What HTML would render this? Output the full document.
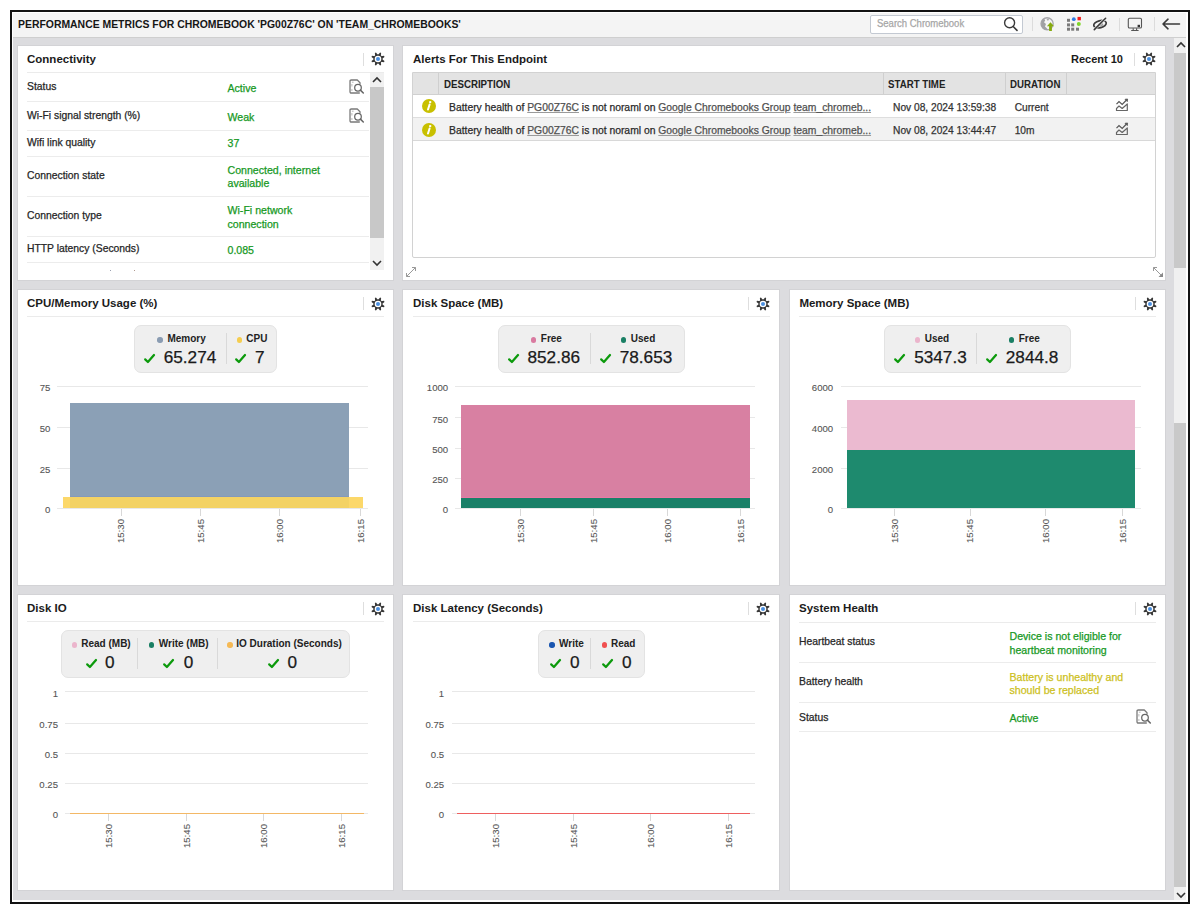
<!DOCTYPE html>
<html><head><meta charset="utf-8"><title>Performance Metrics</title>
<style>
html,body{margin:0;padding:0;width:1200px;height:914px;overflow:hidden;background:#fff}
.r{position:absolute}
.t{position:absolute;white-space:nowrap;line-height:1;font-family:"Liberation Sans", sans-serif;-webkit-text-stroke:0.25px currentColor}
.panel{background:#fff;box-shadow:0 0 0 1px #d3d3d6}
svg.r{overflow:visible}
</style></head><body>
<div class="r" style="left:10px;top:10px;width:1180px;height:894px;box-sizing:border-box;border:2px solid #121212;background:#fff"></div>
<div class="r" style="left:13px;top:13px;width:1173px;height:24px;background:#f4f4f4;"></div>
<div class="r" style="left:13px;top:37px;width:1173px;height:1px;background:#cfcfcf;"></div>
<div class="r" style="left:13px;top:38px;width:1161px;height:862px;background:#dcdcdf;"></div>
<div class="r" style="left:1174px;top:38px;width:12px;height:862px;background:#f0f0f0;"></div>
<div class="r" style="left:1174px;top:53px;width:12px;height:215px;background:#c9c9c9;"></div>
<div class="r" style="left:1174px;top:423px;width:12px;height:464px;background:#c9c9c9;"></div>
<svg class="r" style="left:1175px;top:41px;" width="12" height="8" viewBox="0 0 12 8"><path d="M2,6 L6,2 L10,6" fill="none" stroke="#333" stroke-width="1.6"/></svg>
<svg class="r" style="left:1175px;top:891px;" width="12" height="8" viewBox="0 0 12 8"><path d="M2,2 L6,6 L10,2" fill="none" stroke="#333" stroke-width="1.6"/></svg>
<div class="t" style="left:18.30px;top:18.59px;font-size:11px;font-weight:700;color:#161616;transform:scaleX(0.947);transform-origin:0 0;-webkit-text-stroke:0;">PERFORMANCE METRICS FOR CHROMEBOOK 'PG00Z76C' ON 'TEAM_CHROMEBOOKS'</div>
<div class="r" style="left:870px;top:15px;width:153px;height:19px;box-sizing:border-box;border:1px solid #c3c9d2;border-radius:2px;background:#fff"></div>
<div class="t" style="left:876.70px;top:19.14px;font-size:10px;font-weight:400;color:#a6a6a6;transform:scaleX(0.95);transform-origin:0 0;">Search Chromebook</div>
<svg class="r" style="left:1002px;top:16px;" width="18" height="17" viewBox="0 0 18 17"><circle cx="7.6" cy="6.7" r="5" fill="none" stroke="#3a3a3a" stroke-width="1.4"/><path d="M11.2,10.5 L15,14.4" stroke="#3a3a3a" stroke-width="1.6" stroke-linecap="round"/></svg>
<div class="r" style="left:1032px;top:17px;width:1px;height:14px;background:#dcdcdc;"></div>
<div class="r" style="left:1119px;top:18px;width:1px;height:13px;background:#dcdcdc;"></div>
<div class="r" style="left:1154px;top:17px;width:1px;height:14px;background:#dcdcdc;"></div>
<svg class="r" style="left:1039px;top:16px;" width="17" height="17" viewBox="0 0 17 17"><circle cx="8.1" cy="7.85" r="6.1" fill="none" stroke="#a6a6aa" stroke-width="1.3"/><path d="M2.2,7 Q2.5,3.5 5,2.6 L6.2,4.5 L5,6.3 L7,8 L6,10.5 L8,12.5 L9,14 Q4,14.5 2.2,9.5 Z" fill="#a0a0a4"/><path d="M7.5,3 L9.5,2.4 L10,4 L8.6,4.8 Z" fill="#a8a8ac"/><path d="M11.5,6.3 L15,10.2 H12.9 V14.9 H10.1 V10.2 H7.9 Z" fill="#86aa10"/></svg>
<svg class="r" style="left:1066px;top:16px;" width="16" height="16" viewBox="0 0 16 16"><rect x="1.00" y="2.80" width="3" height="3" fill="#7a7a7a"/><rect x="1.00" y="7.40" width="3" height="3" fill="#7a7a7a"/><rect x="5.20" y="7.40" width="3" height="3" fill="#7a7a7a"/><rect x="1.00" y="11.70" width="3" height="3" fill="#7a7a7a"/><rect x="5.20" y="11.70" width="3" height="3" fill="#7a7a7a"/><rect x="10.00" y="11.70" width="3" height="3" fill="#7a7a7a"/><circle cx="7.80" cy="3.20" r="1.9" fill="#2d7be6"/><rect x="11.50" y="0.90" width="3.4" height="3.4" fill="#f21b1b"/><circle cx="12.80" cy="7.90" r="2" fill="#7ed62a"/></svg>
<svg class="r" style="left:1092px;top:16px;" width="17" height="16" viewBox="0 0 17 16"><ellipse cx="8" cy="8.2" rx="6.4" ry="3.5" transform="rotate(-14 8 8.2)" fill="none" stroke="#3a3a3a" stroke-width="1.7"/><ellipse cx="8.6" cy="8.6" rx="2.6" ry="2.1" fill="#a0a0a0"/><path d="M2.3,13.6 L13.6,2.3" stroke="#f4f4f4" stroke-width="2.8"/><path d="M2.3,13.6 L13.6,2.3" stroke="#3a3a3a" stroke-width="1.6" stroke-linecap="round"/></svg>
<svg class="r" style="left:1127px;top:17px;" width="16" height="15" viewBox="0 0 16 15"><rect x="1.3" y="1.2" width="13.2" height="9.8" rx="1.3" fill="none" stroke="#555" stroke-width="1.1"/><rect x="10.6" y="7.8" width="2.4" height="2.4" fill="#333"/><path d="M6.2,11.3 V13.3 M9.6,11.3 V13.3 M4.2,13.5 H11.6" stroke="#555" stroke-width="1.1"/></svg>
<svg class="r" style="left:1161px;top:17px;" width="21" height="14" viewBox="0 0 21 14"><path d="M2,7 H18.5 M7,2.2 L2,7 L7,11.8" fill="none" stroke="#3a3a3a" stroke-width="1.6" stroke-linecap="round" stroke-linejoin="round"/></svg>
<div class="r panel" style="left:18px;top:46px;width:375px;height:234px"></div>
<div class="t" style="left:27.00px;top:53.57px;font-size:11.5px;font-weight:700;color:#1b1b1b;-webkit-text-stroke:0;">Connectivity</div>
<div class="r" style="left:363px;top:53px;width:1px;height:13px;background:#dedede;"></div>
<svg class="r" style="left:369.7px;top:51.4px;" width="16" height="16" viewBox="0 0 16 16"><polygon points="8.00,4.10 10.04,1.51 11.14,1.97 10.76,5.24 14.03,4.86 14.49,5.96 11.90,8.00 14.49,10.04 14.03,11.14 10.76,10.76 11.14,14.03 10.04,14.49 8.00,11.90 5.96,14.49 4.86,14.03 5.24,10.76 1.97,11.14 1.51,10.04 4.10,8.00 1.51,5.96 1.97,4.86 5.24,5.24 4.86,1.97 5.96,1.51" fill="#383838"/><circle cx="8" cy="8" r="4.5" fill="#383838"/><circle cx="8" cy="8" r="3.3" fill="#fff"/><circle cx="8" cy="8" r="2.0" fill="#4a8fe0"/></svg>
<div class="r" style="left:27px;top:72px;width:357px;height:1px;background:#ebebeb;"></div>
<div class="r" style="left:370px;top:73px;width:14px;height:197px;background:#f1f1f1;"></div>
<div class="r" style="left:370px;top:87px;width:14px;height:151px;background:#c8c8c8;"></div>
<svg class="r" style="left:371px;top:76px;" width="12" height="8" viewBox="0 0 12 8"><path d="M2,6 L6,2 L10,6" fill="none" stroke="#333" stroke-width="1.6"/></svg>
<svg class="r" style="left:371px;top:259px;" width="12" height="8" viewBox="0 0 12 8"><path d="M2,2 L6,6 L10,2" fill="none" stroke="#333" stroke-width="1.6"/></svg>
<div class="r" style="left:27px;top:101px;width:342px;height:1px;background:#ececec;"></div>
<div class="r" style="left:27px;top:130px;width:342px;height:1px;background:#ececec;"></div>
<div class="r" style="left:27px;top:156px;width:342px;height:1px;background:#ececec;"></div>
<div class="r" style="left:27px;top:196px;width:342px;height:1px;background:#ececec;"></div>
<div class="r" style="left:27px;top:236px;width:342px;height:1px;background:#ececec;"></div>
<div class="r" style="left:27px;top:262px;width:342px;height:1px;background:#ececec;"></div>
<div class="t" style="left:27.00px;top:82.24px;font-size:10.35px;font-weight:400;color:#262626;">Status</div>
<div class="t" style="left:27.00px;top:110.74px;font-size:10.35px;font-weight:400;color:#262626;">Wi-Fi signal strength (%)</div>
<div class="t" style="left:27.00px;top:137.74px;font-size:10.35px;font-weight:400;color:#262626;">Wifi link quality</div>
<div class="t" style="left:27.00px;top:170.64px;font-size:10.35px;font-weight:400;color:#262626;">Connection state</div>
<div class="t" style="left:27.00px;top:211.24px;font-size:10.35px;font-weight:400;color:#262626;">Connection type</div>
<div class="t" style="left:27.00px;top:244.24px;font-size:10.35px;font-weight:400;color:#262626;">HTTP latency (Seconds)</div>
<div class="t" style="left:227.50px;top:82.93px;font-size:10.6px;font-weight:400;color:#17991f;">Active</div>
<div class="t" style="left:227.50px;top:111.53px;font-size:10.6px;font-weight:400;color:#17991f;">Weak</div>
<div class="t" style="left:227.50px;top:138.23px;font-size:10.6px;font-weight:400;color:#17991f;">37</div>
<div class="t" style="left:227.50px;top:164.93px;font-size:10.6px;font-weight:400;color:#17991f;">Connected, internet</div>
<div class="t" style="left:227.50px;top:178.33px;font-size:10.6px;font-weight:400;color:#17991f;">available</div>
<div class="t" style="left:227.50px;top:204.93px;font-size:10.6px;font-weight:400;color:#17991f;">Wi-Fi network</div>
<div class="t" style="left:227.50px;top:218.53px;font-size:10.6px;font-weight:400;color:#17991f;">connection</div>
<div class="t" style="left:227.50px;top:244.93px;font-size:10.6px;font-weight:400;color:#17991f;">0.085</div>
<svg class="r" style="left:349px;top:78.7px;" width="16" height="16" viewBox="0 0 16 16"><path d="M10.8,14 H2.3 Q1,14 1,12.7 V2.3 Q1,1 2.3,1 H8.3 L11,3.7 V5.2" fill="none" stroke="#7a7a7a" stroke-width="1.3" stroke-linejoin="round"/><circle cx="9" cy="8.7" r="3.3" fill="#fff" stroke="#666" stroke-width="1.25"/><path d="M11.4,11.1 L14.3,14" stroke="#666" stroke-width="1.5" stroke-linecap="round"/><path d="M2.9,3.2 H4.6 M2.9,5 V7.5 M2.9,10 V12" stroke="#b0b0b0" stroke-width="0.9"/></svg>
<div class="r" style="left:110px;top:270px;width:1px;height:1px;background:#9aa0b0;"></div>
<div class="r" style="left:134px;top:270px;width:1px;height:1px;background:#b09a90;"></div>
<svg class="r" style="left:349px;top:107.7px;" width="16" height="16" viewBox="0 0 16 16"><path d="M10.8,14 H2.3 Q1,14 1,12.7 V2.3 Q1,1 2.3,1 H8.3 L11,3.7 V5.2" fill="none" stroke="#7a7a7a" stroke-width="1.3" stroke-linejoin="round"/><circle cx="9" cy="8.7" r="3.3" fill="#fff" stroke="#666" stroke-width="1.25"/><path d="M11.4,11.1 L14.3,14" stroke="#666" stroke-width="1.5" stroke-linecap="round"/><path d="M2.9,3.2 H4.6 M2.9,5 V7.5 M2.9,10 V12" stroke="#b0b0b0" stroke-width="0.9"/></svg>
<div class="r panel" style="left:403px;top:46px;width:762px;height:234px"></div>
<div class="t" style="left:413.00px;top:53.67px;font-size:11.5px;font-weight:700;color:#1b1b1b;-webkit-text-stroke:0;">Alerts For This Endpoint</div>
<div class="t" style="left:1071.00px;top:54.09px;font-size:11px;font-weight:700;color:#1b1b1b;-webkit-text-stroke:0;">Recent 10</div>
<div class="r" style="left:1134px;top:53px;width:1px;height:13px;background:#dedede;"></div>
<svg class="r" style="left:1141.2px;top:51.3px;" width="16" height="16" viewBox="0 0 16 16"><polygon points="8.00,4.10 10.04,1.51 11.14,1.97 10.76,5.24 14.03,4.86 14.49,5.96 11.90,8.00 14.49,10.04 14.03,11.14 10.76,10.76 11.14,14.03 10.04,14.49 8.00,11.90 5.96,14.49 4.86,14.03 5.24,10.76 1.97,11.14 1.51,10.04 4.10,8.00 1.51,5.96 1.97,4.86 5.24,5.24 4.86,1.97 5.96,1.51" fill="#383838"/><circle cx="8" cy="8" r="4.5" fill="#383838"/><circle cx="8" cy="8" r="3.3" fill="#fff"/><circle cx="8" cy="8" r="2.0" fill="#4a8fe0"/></svg>
<div class="r" style="left:412px;top:72px;width:744px;height:186px;box-sizing:border-box;border:1px solid #d2d2d2;border-radius:0 0 2px 2px"></div>
<div class="r" style="left:413px;top:73px;width:742px;height:21px;background:#e3e3e3;"></div>
<div class="r" style="left:413px;top:94px;width:742px;height:1px;background:#d0d0d0;"></div>
<div class="r" style="left:438px;top:73px;width:1px;height:21px;background:#cfcfcf;"></div>
<div class="r" style="left:883px;top:73px;width:1px;height:21px;background:#cfcfcf;"></div>
<div class="r" style="left:1005px;top:73px;width:1px;height:21px;background:#cfcfcf;"></div>
<div class="r" style="left:1066px;top:73px;width:1px;height:21px;background:#cfcfcf;"></div>
<div class="t" style="left:444.00px;top:78.89px;font-size:11px;font-weight:700;color:#222;transform:scaleX(0.88);transform-origin:0 0;-webkit-text-stroke:0;">DESCRIPTION</div>
<div class="t" style="left:888.30px;top:78.89px;font-size:11px;font-weight:700;color:#222;transform:scaleX(0.88);transform-origin:0 0;-webkit-text-stroke:0;">START TIME</div>
<div class="t" style="left:1010.30px;top:78.89px;font-size:11px;font-weight:700;color:#222;transform:scaleX(0.88);transform-origin:0 0;-webkit-text-stroke:0;">DURATION</div>
<div class="r" style="left:413px;top:117px;width:742px;height:1px;background:#dedede;"></div>
<div class="r" style="left:413px;top:118px;width:742px;height:22px;background:#f2f2f2;"></div>
<div class="r" style="left:413px;top:140px;width:742px;height:1px;background:#d8d8d8;"></div>
<svg class="r" style="left:420.8px;top:98px;" width="16" height="16" viewBox="0 0 16 16"><circle cx="8" cy="8" r="7" fill="#c8c000"/><circle cx="9.2" cy="4.1" r="1.2" fill="#fff"/><path d="M8.6,6.5 L7,11.5" stroke="#fff" stroke-width="2" stroke-linecap="round"/></svg>
<div class="t" style="left:449px;top:102.64px;font-size:10.35px;color:#2a2a2a">Battery health of <span style="text-decoration:underline;text-decoration-color:#9a9a9a;color:#505050">PG00Z76C</span> is not noraml on <span style="text-decoration:underline;text-decoration-color:#9a9a9a;color:#505050">Google Chromebooks Group</span> <span style="text-decoration:underline;text-decoration-color:#9a9a9a;color:#505050">team_chromeb...</span></div>
<div class="t" style="left:893.10px;top:102.77px;font-size:10.2px;font-weight:400;color:#333;">Nov 08, 2024 13:59:38</div>
<div class="t" style="left:1014.70px;top:102.77px;font-size:10.2px;font-weight:400;color:#333;">Current</div>
<svg class="r" style="left:1115px;top:98px;" width="16" height="15" viewBox="0 0 16 15"><path d="M1.5,6.2 L4,3.5 L7.2,6.5 L11.5,2" fill="none" stroke="#555" stroke-width="1.2"/><path d="M10,1.3 L12.6,1 L12.3,3.6 Z" fill="#555" stroke="#555" stroke-width="0.8"/><path d="M1.5,12.5 V10.5 L4,8 L7.2,10.5 L12.3,6 V12.5 Z" fill="none" stroke="#666" stroke-width="1.2" stroke-linejoin="round"/></svg>
<svg class="r" style="left:420.8px;top:121.5px;" width="16" height="16" viewBox="0 0 16 16"><circle cx="8" cy="8" r="7" fill="#c8c000"/><circle cx="9.2" cy="4.1" r="1.2" fill="#fff"/><path d="M8.6,6.5 L7,11.5" stroke="#fff" stroke-width="2" stroke-linecap="round"/></svg>
<div class="t" style="left:449px;top:125.64px;font-size:10.35px;color:#2a2a2a">Battery health of <span style="text-decoration:underline;text-decoration-color:#9a9a9a;color:#505050">PG00Z76C</span> is not noraml on <span style="text-decoration:underline;text-decoration-color:#9a9a9a;color:#505050">Google Chromebooks Group</span> <span style="text-decoration:underline;text-decoration-color:#9a9a9a;color:#505050">team_chromeb...</span></div>
<div class="t" style="left:893.10px;top:125.77px;font-size:10.2px;font-weight:400;color:#333;">Nov 08, 2024 13:44:47</div>
<div class="t" style="left:1014.70px;top:125.77px;font-size:10.2px;font-weight:400;color:#333;">10m</div>
<svg class="r" style="left:1115px;top:121.5px;" width="16" height="15" viewBox="0 0 16 15"><path d="M1.5,6.2 L4,3.5 L7.2,6.5 L11.5,2" fill="none" stroke="#555" stroke-width="1.2"/><path d="M10,1.3 L12.6,1 L12.3,3.6 Z" fill="#555" stroke="#555" stroke-width="0.8"/><path d="M1.5,12.5 V10.5 L4,8 L7.2,10.5 L12.3,6 V12.5 Z" fill="none" stroke="#666" stroke-width="1.2" stroke-linejoin="round"/></svg>
<svg class="r" style="left:404px;top:265px;" width="14" height="14" viewBox="0 0 14 14"><path d="M2.5,11.5 L11.5,2.5 M2.5,11.5 V8 M2.5,11.5 H6 M11.5,2.5 H8 M11.5,2.5 V6" fill="none" stroke="#999" stroke-width="1"/></svg>
<svg class="r" style="left:1151px;top:265px;" width="14" height="14" viewBox="0 0 14 14"><path d="M2.5,2.5 L11.5,11.5 M2.5,2.5 V6 M2.5,2.5 H6" fill="none" stroke="#999" stroke-width="1"/><path d="M12,12 L12,7.5 L7.5,12 Z" fill="#888"/></svg>
<div class="r panel" style="left:18px;top:290px;width:375px;height:295px"></div>
<div class="t" style="left:27.00px;top:298.07px;font-size:11.5px;font-weight:700;color:#1b1b1b;-webkit-text-stroke:0;">CPU/Memory Usage (%)</div>
<div class="r" style="left:363px;top:297px;width:1px;height:13px;background:#dedede;"></div>
<svg class="r" style="left:369.6px;top:295.5px;" width="16" height="16" viewBox="0 0 16 16"><polygon points="8.00,4.10 10.04,1.51 11.14,1.97 10.76,5.24 14.03,4.86 14.49,5.96 11.90,8.00 14.49,10.04 14.03,11.14 10.76,10.76 11.14,14.03 10.04,14.49 8.00,11.90 5.96,14.49 4.86,14.03 5.24,10.76 1.97,11.14 1.51,10.04 4.10,8.00 1.51,5.96 1.97,4.86 5.24,5.24 4.86,1.97 5.96,1.51" fill="#383838"/><circle cx="8" cy="8" r="4.5" fill="#383838"/><circle cx="8" cy="8" r="3.3" fill="#fff"/><circle cx="8" cy="8" r="2.0" fill="#4a8fe0"/></svg>
<div class="r" style="left:27px;top:316px;width:357px;height:1px;background:#ebebeb;"></div>
<div class="r" style="left:134px;top:325px;width:143px;height:48px;box-sizing:border-box;background:#efefef;border:1px solid #e3e3e3;border-radius:7px"></div>
<div class="r" style="left:226px;top:333px;width:1px;height:31px;background:#d9d9d9;"></div>
<div class="r" style="left:157.30px;top:337.30px;width:5.4px;height:5.4px;border-radius:50%;background:#8a9cb2"></div>
<div class="t" style="left:167.40px;top:334.24px;font-size:10px;font-weight:700;color:#222;-webkit-text-stroke:0;">Memory</div>
<svg class="r" style="left:142.8px;top:352.8px;" width="13" height="12" viewBox="0 0 13 12"><polyline points="2.2,6.4 4.9,9 11,2" fill="none" stroke="#0c9a0c" stroke-width="2.25" stroke-linecap="round" stroke-linejoin="round"/></svg>
<div class="t" style="left:163.70px;top:348.74px;font-size:17.2px;font-weight:400;color:#1a1a1a;">65.274</div>
<div class="r" style="left:236.70px;top:337.30px;width:5.4px;height:5.4px;border-radius:50%;background:#f5cd4f"></div>
<div class="t" style="left:246.30px;top:334.24px;font-size:10px;font-weight:700;color:#222;-webkit-text-stroke:0;">CPU</div>
<svg class="r" style="left:234.2px;top:352.8px;" width="13" height="12" viewBox="0 0 13 12"><polyline points="2.2,6.4 4.9,9 11,2" fill="none" stroke="#0c9a0c" stroke-width="2.25" stroke-linecap="round" stroke-linejoin="round"/></svg>
<div class="t" style="left:255.00px;top:348.74px;font-size:17.2px;font-weight:400;color:#1a1a1a;">7</div>
<div class="r" style="left:57px;top:386px;width:311px;height:1px;background:#e8e8e8;"></div>
<div class="t" style="right:1149.70px;top:383.17px;font-size:9.6px;font-weight:400;color:#555;text-align:right;-webkit-text-stroke:0.1px #555;">75</div>
<div class="r" style="left:57px;top:427px;width:311px;height:1px;background:#e8e8e8;"></div>
<div class="t" style="right:1149.70px;top:424.07px;font-size:9.6px;font-weight:400;color:#555;text-align:right;-webkit-text-stroke:0.1px #555;">50</div>
<div class="r" style="left:57px;top:468px;width:311px;height:1px;background:#e8e8e8;"></div>
<div class="t" style="right:1149.70px;top:465.17px;font-size:9.6px;font-weight:400;color:#555;text-align:right;-webkit-text-stroke:0.1px #555;">25</div>
<div class="r" style="left:57px;top:508px;width:311px;height:1px;background:#e8e8e8;"></div>
<div class="t" style="right:1149.70px;top:505.47px;font-size:9.6px;font-weight:400;color:#555;text-align:right;-webkit-text-stroke:0.1px #555;">0</div>
<div class="r" style="left:121px;top:509px;width:1px;height:7px;background:#d8d8d8;"></div>
<div class="t" style="left:101.30px;top:525.00px;width:40px;height:12px;line-height:12px;text-align:center;font-size:9.6px;color:#5a5a5a;-webkit-text-stroke:0.1px #5a5a5a;transform:rotate(-90deg)">15:30</div>
<div class="r" style="left:200px;top:509px;width:1px;height:7px;background:#d8d8d8;"></div>
<div class="t" style="left:181.00px;top:525.00px;width:40px;height:12px;line-height:12px;text-align:center;font-size:9.6px;color:#5a5a5a;-webkit-text-stroke:0.1px #5a5a5a;transform:rotate(-90deg)">15:45</div>
<div class="r" style="left:279px;top:509px;width:1px;height:7px;background:#d8d8d8;"></div>
<div class="t" style="left:260.00px;top:525.00px;width:40px;height:12px;line-height:12px;text-align:center;font-size:9.6px;color:#5a5a5a;-webkit-text-stroke:0.1px #5a5a5a;transform:rotate(-90deg)">16:00</div>
<div class="r" style="left:360px;top:509px;width:1px;height:7px;background:#d8d8d8;"></div>
<div class="t" style="left:340.70px;top:525.00px;width:40px;height:12px;line-height:12px;text-align:center;font-size:9.6px;color:#5a5a5a;-webkit-text-stroke:0.1px #5a5a5a;transform:rotate(-90deg)">16:15</div>
<div class="r" style="left:70px;top:403px;width:279px;height:94px;background:#8ba0b6;"></div>
<div class="r" style="left:70px;top:496px;width:279px;height:1px;background:#8499ba;"></div>
<div class="r" style="left:63px;top:497px;width:7px;height:11px;background:#fcd86a;"></div>
<div class="r" style="left:70px;top:497px;width:279px;height:11px;background:#f3d264;"></div>
<div class="r" style="left:349px;top:497px;width:14px;height:11px;background:#fcd86a;"></div>
<div class="r panel" style="left:403px;top:290px;width:376px;height:295px"></div>
<div class="t" style="left:413.00px;top:298.07px;font-size:11.5px;font-weight:700;color:#1b1b1b;-webkit-text-stroke:0;">Disk Space (MB)</div>
<div class="r" style="left:748px;top:297px;width:1px;height:13px;background:#dedede;"></div>
<svg class="r" style="left:755.4px;top:295.5px;" width="16" height="16" viewBox="0 0 16 16"><polygon points="8.00,4.10 10.04,1.51 11.14,1.97 10.76,5.24 14.03,4.86 14.49,5.96 11.90,8.00 14.49,10.04 14.03,11.14 10.76,10.76 11.14,14.03 10.04,14.49 8.00,11.90 5.96,14.49 4.86,14.03 5.24,10.76 1.97,11.14 1.51,10.04 4.10,8.00 1.51,5.96 1.97,4.86 5.24,5.24 4.86,1.97 5.96,1.51" fill="#383838"/><circle cx="8" cy="8" r="4.5" fill="#383838"/><circle cx="8" cy="8" r="3.3" fill="#fff"/><circle cx="8" cy="8" r="2.0" fill="#4a8fe0"/></svg>
<div class="r" style="left:413px;top:316px;width:357px;height:1px;background:#ebebeb;"></div>
<div class="r" style="left:498px;top:325px;width:187px;height:48px;box-sizing:border-box;background:#efefef;border:1px solid #e3e3e3;border-radius:7px"></div>
<div class="r" style="left:590px;top:333px;width:1px;height:31px;background:#d9d9d9;"></div>
<div class="r" style="left:531.00px;top:337.30px;width:5.4px;height:5.4px;border-radius:50%;background:#d97aa0"></div>
<div class="t" style="left:540.80px;top:334.24px;font-size:10px;font-weight:700;color:#222;-webkit-text-stroke:0;">Free</div>
<svg class="r" style="left:506.8px;top:352.8px;" width="13" height="12" viewBox="0 0 13 12"><polyline points="2.2,6.4 4.9,9 11,2" fill="none" stroke="#0c9a0c" stroke-width="2.25" stroke-linecap="round" stroke-linejoin="round"/></svg>
<div class="t" style="left:527.50px;top:348.74px;font-size:17.2px;font-weight:400;color:#1a1a1a;">852.86</div>
<div class="r" style="left:620.60px;top:337.30px;width:5.4px;height:5.4px;border-radius:50%;background:#1a7f64"></div>
<div class="t" style="left:630.80px;top:334.24px;font-size:10px;font-weight:700;color:#222;-webkit-text-stroke:0;">Used</div>
<svg class="r" style="left:598.5px;top:352.8px;" width="13" height="12" viewBox="0 0 13 12"><polyline points="2.2,6.4 4.9,9 11,2" fill="none" stroke="#0c9a0c" stroke-width="2.25" stroke-linecap="round" stroke-linejoin="round"/></svg>
<div class="t" style="left:619.70px;top:348.74px;font-size:17.2px;font-weight:400;color:#1a1a1a;">78.653</div>
<div class="r" style="left:455px;top:386px;width:300px;height:1px;background:#e8e8e8;"></div>
<div class="t" style="right:751.80px;top:383.17px;font-size:9.6px;font-weight:400;color:#555;text-align:right;-webkit-text-stroke:0.1px #555;">1000</div>
<div class="r" style="left:455px;top:417px;width:300px;height:1px;background:#e8e8e8;"></div>
<div class="t" style="right:751.80px;top:414.67px;font-size:9.6px;font-weight:400;color:#555;text-align:right;-webkit-text-stroke:0.1px #555;">750</div>
<div class="r" style="left:455px;top:448px;width:300px;height:1px;background:#e8e8e8;"></div>
<div class="t" style="right:751.80px;top:445.27px;font-size:9.6px;font-weight:400;color:#555;text-align:right;-webkit-text-stroke:0.1px #555;">500</div>
<div class="r" style="left:455px;top:478px;width:300px;height:1px;background:#e8e8e8;"></div>
<div class="t" style="right:751.80px;top:474.87px;font-size:9.6px;font-weight:400;color:#555;text-align:right;-webkit-text-stroke:0.1px #555;">250</div>
<div class="r" style="left:455px;top:508px;width:300px;height:1px;background:#e8e8e8;"></div>
<div class="t" style="right:751.80px;top:505.47px;font-size:9.6px;font-weight:400;color:#555;text-align:right;-webkit-text-stroke:0.1px #555;">0</div>
<div class="r" style="left:520px;top:509px;width:1px;height:7px;background:#d8d8d8;"></div>
<div class="t" style="left:501.20px;top:525.00px;width:40px;height:12px;line-height:12px;text-align:center;font-size:9.6px;color:#5a5a5a;-webkit-text-stroke:0.1px #5a5a5a;transform:rotate(-90deg)">15:30</div>
<div class="r" style="left:593px;top:509px;width:1px;height:7px;background:#d8d8d8;"></div>
<div class="t" style="left:574.20px;top:525.00px;width:40px;height:12px;line-height:12px;text-align:center;font-size:9.6px;color:#5a5a5a;-webkit-text-stroke:0.1px #5a5a5a;transform:rotate(-90deg)">15:45</div>
<div class="r" style="left:667px;top:509px;width:1px;height:7px;background:#d8d8d8;"></div>
<div class="t" style="left:647.60px;top:525.00px;width:40px;height:12px;line-height:12px;text-align:center;font-size:9.6px;color:#5a5a5a;-webkit-text-stroke:0.1px #5a5a5a;transform:rotate(-90deg)">16:00</div>
<div class="r" style="left:740px;top:509px;width:1px;height:7px;background:#d8d8d8;"></div>
<div class="t" style="left:721.00px;top:525.00px;width:40px;height:12px;line-height:12px;text-align:center;font-size:9.6px;color:#5a5a5a;-webkit-text-stroke:0.1px #5a5a5a;transform:rotate(-90deg)">16:15</div>
<div class="r" style="left:461px;top:405px;width:289px;height:93px;background:#d880a2;"></div>
<div class="r" style="left:461px;top:497px;width:289px;height:1px;background:#ea7aa6;"></div>
<div class="r" style="left:461px;top:498px;width:289px;height:10px;background:#1a8068;"></div>
<div class="r panel" style="left:790px;top:290px;width:375px;height:295px"></div>
<div class="t" style="left:799.40px;top:298.07px;font-size:11.5px;font-weight:700;color:#1b1b1b;-webkit-text-stroke:0;">Memory Space (MB)</div>
<div class="r" style="left:1135px;top:297px;width:1px;height:13px;background:#dedede;"></div>
<svg class="r" style="left:1141.8px;top:295.5px;" width="16" height="16" viewBox="0 0 16 16"><polygon points="8.00,4.10 10.04,1.51 11.14,1.97 10.76,5.24 14.03,4.86 14.49,5.96 11.90,8.00 14.49,10.04 14.03,11.14 10.76,10.76 11.14,14.03 10.04,14.49 8.00,11.90 5.96,14.49 4.86,14.03 5.24,10.76 1.97,11.14 1.51,10.04 4.10,8.00 1.51,5.96 1.97,4.86 5.24,5.24 4.86,1.97 5.96,1.51" fill="#383838"/><circle cx="8" cy="8" r="4.5" fill="#383838"/><circle cx="8" cy="8" r="3.3" fill="#fff"/><circle cx="8" cy="8" r="2.0" fill="#4a8fe0"/></svg>
<div class="r" style="left:799px;top:316px;width:357px;height:1px;background:#ebebeb;"></div>
<div class="r" style="left:884px;top:325px;width:187px;height:48px;box-sizing:border-box;background:#efefef;border:1px solid #e3e3e3;border-radius:7px"></div>
<div class="r" style="left:976px;top:333px;width:1px;height:31px;background:#d9d9d9;"></div>
<div class="r" style="left:914.80px;top:337.30px;width:5.4px;height:5.4px;border-radius:50%;background:#ebb5cc"></div>
<div class="t" style="left:924.70px;top:334.24px;font-size:10px;font-weight:700;color:#222;-webkit-text-stroke:0;">Used</div>
<svg class="r" style="left:892.7px;top:352.8px;" width="13" height="12" viewBox="0 0 13 12"><polyline points="2.2,6.4 4.9,9 11,2" fill="none" stroke="#0c9a0c" stroke-width="2.25" stroke-linecap="round" stroke-linejoin="round"/></svg>
<div class="t" style="left:914.20px;top:348.74px;font-size:17.2px;font-weight:400;color:#1a1a1a;">5347.3</div>
<div class="r" style="left:1008.60px;top:337.30px;width:5.4px;height:5.4px;border-radius:50%;background:#1a7f64"></div>
<div class="t" style="left:1018.70px;top:334.24px;font-size:10px;font-weight:700;color:#222;-webkit-text-stroke:0;">Free</div>
<svg class="r" style="left:985.2px;top:352.8px;" width="13" height="12" viewBox="0 0 13 12"><polyline points="2.2,6.4 4.9,9 11,2" fill="none" stroke="#0c9a0c" stroke-width="2.25" stroke-linecap="round" stroke-linejoin="round"/></svg>
<div class="t" style="left:1005.80px;top:348.74px;font-size:17.2px;font-weight:400;color:#1a1a1a;">2844.8</div>
<div class="r" style="left:841px;top:386px;width:300px;height:1px;background:#e8e8e8;"></div>
<div class="t" style="right:366.80px;top:383.17px;font-size:9.6px;font-weight:400;color:#555;text-align:right;-webkit-text-stroke:0.1px #555;">6000</div>
<div class="r" style="left:841px;top:427px;width:300px;height:1px;background:#e8e8e8;"></div>
<div class="t" style="right:366.80px;top:424.07px;font-size:9.6px;font-weight:400;color:#555;text-align:right;-webkit-text-stroke:0.1px #555;">4000</div>
<div class="r" style="left:841px;top:468px;width:300px;height:1px;background:#e8e8e8;"></div>
<div class="t" style="right:366.80px;top:465.17px;font-size:9.6px;font-weight:400;color:#555;text-align:right;-webkit-text-stroke:0.1px #555;">2000</div>
<div class="r" style="left:841px;top:508px;width:300px;height:1px;background:#e8e8e8;"></div>
<div class="t" style="right:366.80px;top:505.47px;font-size:9.6px;font-weight:400;color:#555;text-align:right;-webkit-text-stroke:0.1px #555;">0</div>
<div class="r" style="left:894px;top:509px;width:1px;height:7px;background:#d8d8d8;"></div>
<div class="t" style="left:875.10px;top:525.00px;width:40px;height:12px;line-height:12px;text-align:center;font-size:9.6px;color:#5a5a5a;-webkit-text-stroke:0.1px #5a5a5a;transform:rotate(-90deg)">15:30</div>
<div class="r" style="left:970px;top:509px;width:1px;height:7px;background:#d8d8d8;"></div>
<div class="t" style="left:950.40px;top:525.00px;width:40px;height:12px;line-height:12px;text-align:center;font-size:9.6px;color:#5a5a5a;-webkit-text-stroke:0.1px #5a5a5a;transform:rotate(-90deg)">15:45</div>
<div class="r" style="left:1045px;top:509px;width:1px;height:7px;background:#d8d8d8;"></div>
<div class="t" style="left:1025.80px;top:525.00px;width:40px;height:12px;line-height:12px;text-align:center;font-size:9.6px;color:#5a5a5a;-webkit-text-stroke:0.1px #5a5a5a;transform:rotate(-90deg)">16:00</div>
<div class="r" style="left:1122px;top:509px;width:1px;height:7px;background:#d8d8d8;"></div>
<div class="t" style="left:1102.50px;top:525.00px;width:40px;height:12px;line-height:12px;text-align:center;font-size:9.6px;color:#5a5a5a;-webkit-text-stroke:0.1px #5a5a5a;transform:rotate(-90deg)">16:15</div>
<div class="r" style="left:847px;top:400px;width:288px;height:50px;background:#ebbad0;"></div>
<div class="r" style="left:847px;top:450px;width:288px;height:58px;background:#1e8a6e;"></div>
<div class="r panel" style="left:18px;top:595px;width:375px;height:295px"></div>
<div class="t" style="left:27.00px;top:603.07px;font-size:11.5px;font-weight:700;color:#1b1b1b;-webkit-text-stroke:0;">Disk IO</div>
<div class="r" style="left:363px;top:602px;width:1px;height:13px;background:#dedede;"></div>
<svg class="r" style="left:369.6px;top:600.5px;" width="16" height="16" viewBox="0 0 16 16"><polygon points="8.00,4.10 10.04,1.51 11.14,1.97 10.76,5.24 14.03,4.86 14.49,5.96 11.90,8.00 14.49,10.04 14.03,11.14 10.76,10.76 11.14,14.03 10.04,14.49 8.00,11.90 5.96,14.49 4.86,14.03 5.24,10.76 1.97,11.14 1.51,10.04 4.10,8.00 1.51,5.96 1.97,4.86 5.24,5.24 4.86,1.97 5.96,1.51" fill="#383838"/><circle cx="8" cy="8" r="4.5" fill="#383838"/><circle cx="8" cy="8" r="3.3" fill="#fff"/><circle cx="8" cy="8" r="2.0" fill="#4a8fe0"/></svg>
<div class="r" style="left:27px;top:621px;width:357px;height:1px;background:#ebebeb;"></div>
<div class="r" style="left:61px;top:630px;width:289px;height:48px;box-sizing:border-box;background:#efefef;border:1px solid #e3e3e3;border-radius:7px"></div>
<div class="r" style="left:137px;top:638px;width:1px;height:31px;background:#d9d9d9;"></div>
<div class="r" style="left:217px;top:638px;width:1px;height:31px;background:#d9d9d9;"></div>
<div class="r" style="left:71.80px;top:642.30px;width:5.4px;height:5.4px;border-radius:50%;background:#ebb5cc"></div>
<div class="t" style="left:81.25px;top:639.24px;font-size:10px;font-weight:700;color:#222;-webkit-text-stroke:0;">Read (MB)</div>
<svg class="r" style="left:84.75px;top:658.25px;" width="13" height="12" viewBox="0 0 13 12"><polyline points="2.2,6.4 4.9,9 11,2" fill="none" stroke="#0c9a0c" stroke-width="2.25" stroke-linecap="round" stroke-linejoin="round"/></svg>
<div class="t" style="left:105.00px;top:654.19px;font-size:17.2px;font-weight:400;color:#1a1a1a;">0</div>
<div class="r" style="left:148.55px;top:642.30px;width:5.4px;height:5.4px;border-radius:50%;background:#1a7f64"></div>
<div class="t" style="left:158.75px;top:639.24px;font-size:10px;font-weight:700;color:#222;-webkit-text-stroke:0;">Write (MB)</div>
<svg class="r" style="left:162.25px;top:658.25px;" width="13" height="12" viewBox="0 0 13 12"><polyline points="2.2,6.4 4.9,9 11,2" fill="none" stroke="#0c9a0c" stroke-width="2.25" stroke-linecap="round" stroke-linejoin="round"/></svg>
<div class="t" style="left:183.75px;top:654.19px;font-size:17.2px;font-weight:400;color:#1a1a1a;">0</div>
<div class="r" style="left:227.30px;top:642.30px;width:5.4px;height:5.4px;border-radius:50%;background:#f5b955"></div>
<div class="t" style="left:236.25px;top:639.24px;font-size:10px;font-weight:700;color:#222;-webkit-text-stroke:0;">IO Duration (Seconds)</div>
<svg class="r" style="left:267.25px;top:658.25px;" width="13" height="12" viewBox="0 0 13 12"><polyline points="2.2,6.4 4.9,9 11,2" fill="none" stroke="#0c9a0c" stroke-width="2.25" stroke-linecap="round" stroke-linejoin="round"/></svg>
<div class="t" style="left:287.50px;top:654.19px;font-size:17.2px;font-weight:400;color:#1a1a1a;">0</div>
<div class="r" style="left:65px;top:691px;width:303px;height:1px;background:#e8e8e8;"></div>
<div class="t" style="right:1142.00px;top:688.67px;font-size:9.6px;font-weight:400;color:#555;text-align:right;-webkit-text-stroke:0.1px #555;">1</div>
<div class="r" style="left:65px;top:723px;width:303px;height:1px;background:#e8e8e8;"></div>
<div class="t" style="right:1142.00px;top:720.37px;font-size:9.6px;font-weight:400;color:#555;text-align:right;-webkit-text-stroke:0.1px #555;">0.75</div>
<div class="r" style="left:65px;top:753px;width:303px;height:1px;background:#e8e8e8;"></div>
<div class="t" style="right:1142.00px;top:750.47px;font-size:9.6px;font-weight:400;color:#555;text-align:right;-webkit-text-stroke:0.1px #555;">0.5</div>
<div class="r" style="left:65px;top:783px;width:303px;height:1px;background:#e8e8e8;"></div>
<div class="t" style="right:1142.00px;top:780.37px;font-size:9.6px;font-weight:400;color:#555;text-align:right;-webkit-text-stroke:0.1px #555;">0.25</div>
<div class="r" style="left:65px;top:813px;width:303px;height:1px;background:#e8e8e8;"></div>
<div class="t" style="right:1142.00px;top:810.47px;font-size:9.6px;font-weight:400;color:#555;text-align:right;-webkit-text-stroke:0.1px #555;">0</div>
<div class="r" style="left:108px;top:814px;width:1px;height:7px;background:#d8d8d8;"></div>
<div class="t" style="left:89.00px;top:830.00px;width:40px;height:12px;line-height:12px;text-align:center;font-size:9.6px;color:#5a5a5a;-webkit-text-stroke:0.1px #5a5a5a;transform:rotate(-90deg)">15:30</div>
<div class="r" style="left:186px;top:814px;width:1px;height:7px;background:#d8d8d8;"></div>
<div class="t" style="left:167.10px;top:830.00px;width:40px;height:12px;line-height:12px;text-align:center;font-size:9.6px;color:#5a5a5a;-webkit-text-stroke:0.1px #5a5a5a;transform:rotate(-90deg)">15:45</div>
<div class="r" style="left:263px;top:814px;width:1px;height:7px;background:#d8d8d8;"></div>
<div class="t" style="left:244.20px;top:830.00px;width:40px;height:12px;line-height:12px;text-align:center;font-size:9.6px;color:#5a5a5a;-webkit-text-stroke:0.1px #5a5a5a;transform:rotate(-90deg)">16:00</div>
<div class="r" style="left:341px;top:814px;width:1px;height:7px;background:#d8d8d8;"></div>
<div class="t" style="left:321.90px;top:830.00px;width:40px;height:12px;line-height:12px;text-align:center;font-size:9.6px;color:#5a5a5a;-webkit-text-stroke:0.1px #5a5a5a;transform:rotate(-90deg)">16:15</div>
<div class="r" style="left:70px;top:813px;width:294px;height:1px;background:#f3b866;"></div>
<div class="r panel" style="left:403px;top:595px;width:376px;height:295px"></div>
<div class="t" style="left:413.00px;top:603.07px;font-size:11.5px;font-weight:700;color:#1b1b1b;-webkit-text-stroke:0;">Disk Latency (Seconds)</div>
<div class="r" style="left:748px;top:602px;width:1px;height:13px;background:#dedede;"></div>
<svg class="r" style="left:755.4px;top:600.5px;" width="16" height="16" viewBox="0 0 16 16"><polygon points="8.00,4.10 10.04,1.51 11.14,1.97 10.76,5.24 14.03,4.86 14.49,5.96 11.90,8.00 14.49,10.04 14.03,11.14 10.76,10.76 11.14,14.03 10.04,14.49 8.00,11.90 5.96,14.49 4.86,14.03 5.24,10.76 1.97,11.14 1.51,10.04 4.10,8.00 1.51,5.96 1.97,4.86 5.24,5.24 4.86,1.97 5.96,1.51" fill="#383838"/><circle cx="8" cy="8" r="4.5" fill="#383838"/><circle cx="8" cy="8" r="3.3" fill="#fff"/><circle cx="8" cy="8" r="2.0" fill="#4a8fe0"/></svg>
<div class="r" style="left:413px;top:621px;width:357px;height:1px;background:#ebebeb;"></div>
<div class="r" style="left:538px;top:630px;width:107px;height:48px;box-sizing:border-box;background:#efefef;border:1px solid #e3e3e3;border-radius:7px"></div>
<div class="r" style="left:590px;top:638px;width:1px;height:31px;background:#d9d9d9;"></div>
<div class="r" style="left:549.30px;top:642.30px;width:5.4px;height:5.4px;border-radius:50%;background:#1a56b0"></div>
<div class="t" style="left:559.00px;top:639.24px;font-size:10px;font-weight:700;color:#222;-webkit-text-stroke:0;">Write</div>
<svg class="r" style="left:548.5px;top:658.25px;" width="13" height="12" viewBox="0 0 13 12"><polyline points="2.2,6.4 4.9,9 11,2" fill="none" stroke="#0c9a0c" stroke-width="2.25" stroke-linecap="round" stroke-linejoin="round"/></svg>
<div class="t" style="left:570.00px;top:654.19px;font-size:17.2px;font-weight:400;color:#1a1a1a;">0</div>
<div class="r" style="left:601.50px;top:642.30px;width:5.4px;height:5.4px;border-radius:50%;background:#f05050"></div>
<div class="t" style="left:611.00px;top:639.24px;font-size:10px;font-weight:700;color:#222;-webkit-text-stroke:0;">Read</div>
<svg class="r" style="left:601.0px;top:658.25px;" width="13" height="12" viewBox="0 0 13 12"><polyline points="2.2,6.4 4.9,9 11,2" fill="none" stroke="#0c9a0c" stroke-width="2.25" stroke-linecap="round" stroke-linejoin="round"/></svg>
<div class="t" style="left:622.00px;top:654.19px;font-size:17.2px;font-weight:400;color:#1a1a1a;">0</div>
<div class="r" style="left:452px;top:691px;width:303px;height:1px;background:#e8e8e8;"></div>
<div class="t" style="right:755.80px;top:688.67px;font-size:9.6px;font-weight:400;color:#555;text-align:right;-webkit-text-stroke:0.1px #555;">1</div>
<div class="r" style="left:452px;top:723px;width:303px;height:1px;background:#e8e8e8;"></div>
<div class="t" style="right:755.80px;top:720.37px;font-size:9.6px;font-weight:400;color:#555;text-align:right;-webkit-text-stroke:0.1px #555;">0.75</div>
<div class="r" style="left:452px;top:753px;width:303px;height:1px;background:#e8e8e8;"></div>
<div class="t" style="right:755.80px;top:750.47px;font-size:9.6px;font-weight:400;color:#555;text-align:right;-webkit-text-stroke:0.1px #555;">0.5</div>
<div class="r" style="left:452px;top:783px;width:303px;height:1px;background:#e8e8e8;"></div>
<div class="t" style="right:755.80px;top:780.37px;font-size:9.6px;font-weight:400;color:#555;text-align:right;-webkit-text-stroke:0.1px #555;">0.25</div>
<div class="r" style="left:452px;top:813px;width:303px;height:1px;background:#e8e8e8;"></div>
<div class="t" style="right:755.80px;top:810.47px;font-size:9.6px;font-weight:400;color:#555;text-align:right;-webkit-text-stroke:0.1px #555;">0</div>
<div class="r" style="left:495px;top:814px;width:1px;height:7px;background:#d8d8d8;"></div>
<div class="t" style="left:476.00px;top:830.00px;width:40px;height:12px;line-height:12px;text-align:center;font-size:9.6px;color:#5a5a5a;-webkit-text-stroke:0.1px #5a5a5a;transform:rotate(-90deg)">15:30</div>
<div class="r" style="left:573px;top:814px;width:1px;height:7px;background:#d8d8d8;"></div>
<div class="t" style="left:553.60px;top:830.00px;width:40px;height:12px;line-height:12px;text-align:center;font-size:9.6px;color:#5a5a5a;-webkit-text-stroke:0.1px #5a5a5a;transform:rotate(-90deg)">15:45</div>
<div class="r" style="left:650px;top:814px;width:1px;height:7px;background:#d8d8d8;"></div>
<div class="t" style="left:631.20px;top:830.00px;width:40px;height:12px;line-height:12px;text-align:center;font-size:9.6px;color:#5a5a5a;-webkit-text-stroke:0.1px #5a5a5a;transform:rotate(-90deg)">16:00</div>
<div class="r" style="left:728px;top:814px;width:1px;height:7px;background:#d8d8d8;"></div>
<div class="t" style="left:708.80px;top:830.00px;width:40px;height:12px;line-height:12px;text-align:center;font-size:9.6px;color:#5a5a5a;-webkit-text-stroke:0.1px #5a5a5a;transform:rotate(-90deg)">16:15</div>
<div class="r" style="left:457px;top:813px;width:293px;height:1px;background:#ee5f5f;"></div>
<div class="r panel" style="left:790px;top:595px;width:375px;height:295px"></div>
<div class="t" style="left:799.00px;top:603.27px;font-size:11.5px;font-weight:700;color:#1b1b1b;-webkit-text-stroke:0;">System Health</div>
<div class="r" style="left:1135px;top:602px;width:1px;height:13px;background:#dedede;"></div>
<svg class="r" style="left:1142px;top:600.5px;" width="16" height="16" viewBox="0 0 16 16"><polygon points="8.00,4.10 10.04,1.51 11.14,1.97 10.76,5.24 14.03,4.86 14.49,5.96 11.90,8.00 14.49,10.04 14.03,11.14 10.76,10.76 11.14,14.03 10.04,14.49 8.00,11.90 5.96,14.49 4.86,14.03 5.24,10.76 1.97,11.14 1.51,10.04 4.10,8.00 1.51,5.96 1.97,4.86 5.24,5.24 4.86,1.97 5.96,1.51" fill="#383838"/><circle cx="8" cy="8" r="4.5" fill="#383838"/><circle cx="8" cy="8" r="3.3" fill="#fff"/><circle cx="8" cy="8" r="2.0" fill="#4a8fe0"/></svg>
<div class="r" style="left:799px;top:622px;width:357px;height:1px;background:#ebebeb;"></div>
<div class="r" style="left:799px;top:662px;width:357px;height:1px;background:#ececec;"></div>
<div class="r" style="left:799px;top:702px;width:357px;height:1px;background:#ececec;"></div>
<div class="r" style="left:799px;top:731px;width:357px;height:1px;background:#ececec;"></div>
<div class="t" style="left:799.00px;top:637.24px;font-size:10.35px;font-weight:400;color:#262626;">Heartbeat status</div>
<div class="t" style="left:799.00px;top:677.44px;font-size:10.35px;font-weight:400;color:#262626;">Battery health</div>
<div class="t" style="left:799.00px;top:712.64px;font-size:10.35px;font-weight:400;color:#262626;">Status</div>
<div class="t" style="left:1009.50px;top:631.23px;font-size:10.6px;font-weight:400;color:#17991f;">Device is not eligible for</div>
<div class="t" style="left:1009.50px;top:645.23px;font-size:10.6px;font-weight:400;color:#17991f;">heartbeat monitoring</div>
<div class="t" style="left:1009.50px;top:671.53px;font-size:10.6px;font-weight:400;color:#cdbf22;">Battery is unhealthy and</div>
<div class="t" style="left:1009.50px;top:685.43px;font-size:10.6px;font-weight:400;color:#cdbf22;">should be replaced</div>
<div class="t" style="left:1009.50px;top:713.33px;font-size:10.6px;font-weight:400;color:#17991f;">Active</div>
<svg class="r" style="left:1136px;top:708.7px;" width="16" height="16" viewBox="0 0 16 16"><path d="M10.8,14 H2.3 Q1,14 1,12.7 V2.3 Q1,1 2.3,1 H8.3 L11,3.7 V5.2" fill="none" stroke="#7a7a7a" stroke-width="1.3" stroke-linejoin="round"/><circle cx="9" cy="8.7" r="3.3" fill="#fff" stroke="#666" stroke-width="1.25"/><path d="M11.4,11.1 L14.3,14" stroke="#666" stroke-width="1.5" stroke-linecap="round"/><path d="M2.9,3.2 H4.6 M2.9,5 V7.5 M2.9,10 V12" stroke="#b0b0b0" stroke-width="0.9"/></svg>
</body></html>
